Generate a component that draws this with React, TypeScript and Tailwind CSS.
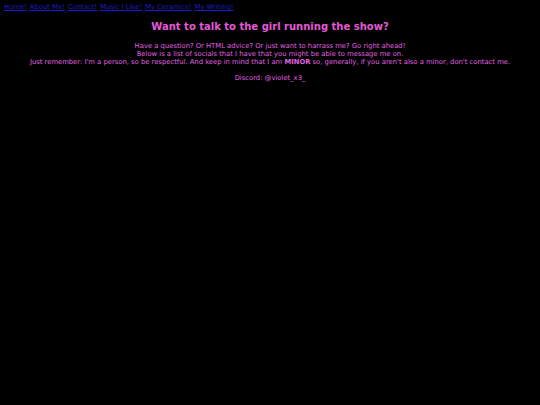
export default function App() {
  const links = ['Home!', 'About Me!', 'Contact!', 'Music I Like!', 'My Ceramics!', 'My Writing!'];

  return (
    <div className="min-h-[405px] bg-black font-['DejaVu_Sans',sans-serif] text-[#e060e0]">
      <nav className="flex gap-[3px] px-[4px] pt-[3px] text-[6.8px] leading-[8px]">
        {links.map((l) => (
          <a key={l} href="#" className="text-[#1c1cc8] underline">
            {l}
          </a>
        ))}
      </nav>
      <div className="text-center">
        <h1 className="mt-[9px] text-[10px] font-bold leading-[14px] text-[#e458d8]">Want to talk to the girl running the show?</h1>
        <p className="mt-[8px] text-[6.8px] leading-[8px]">
          Have a question? Or HTML advice? Or just want to harrass me? Go right ahead!
          <br />
          Below is a list of socials that I have that you might be able to message me on.
          <br />
          Just remember: I'm a person, so be respectful. And keep in mind that I am <b>MINOR</b> so, generally, if you
          aren't also a minor, don't contact me.
        </p>
        <p className="mt-[8px] text-[6.8px] leading-[8px]">Discord: @violet_x3_</p>
      </div>
    </div>
  );
}
